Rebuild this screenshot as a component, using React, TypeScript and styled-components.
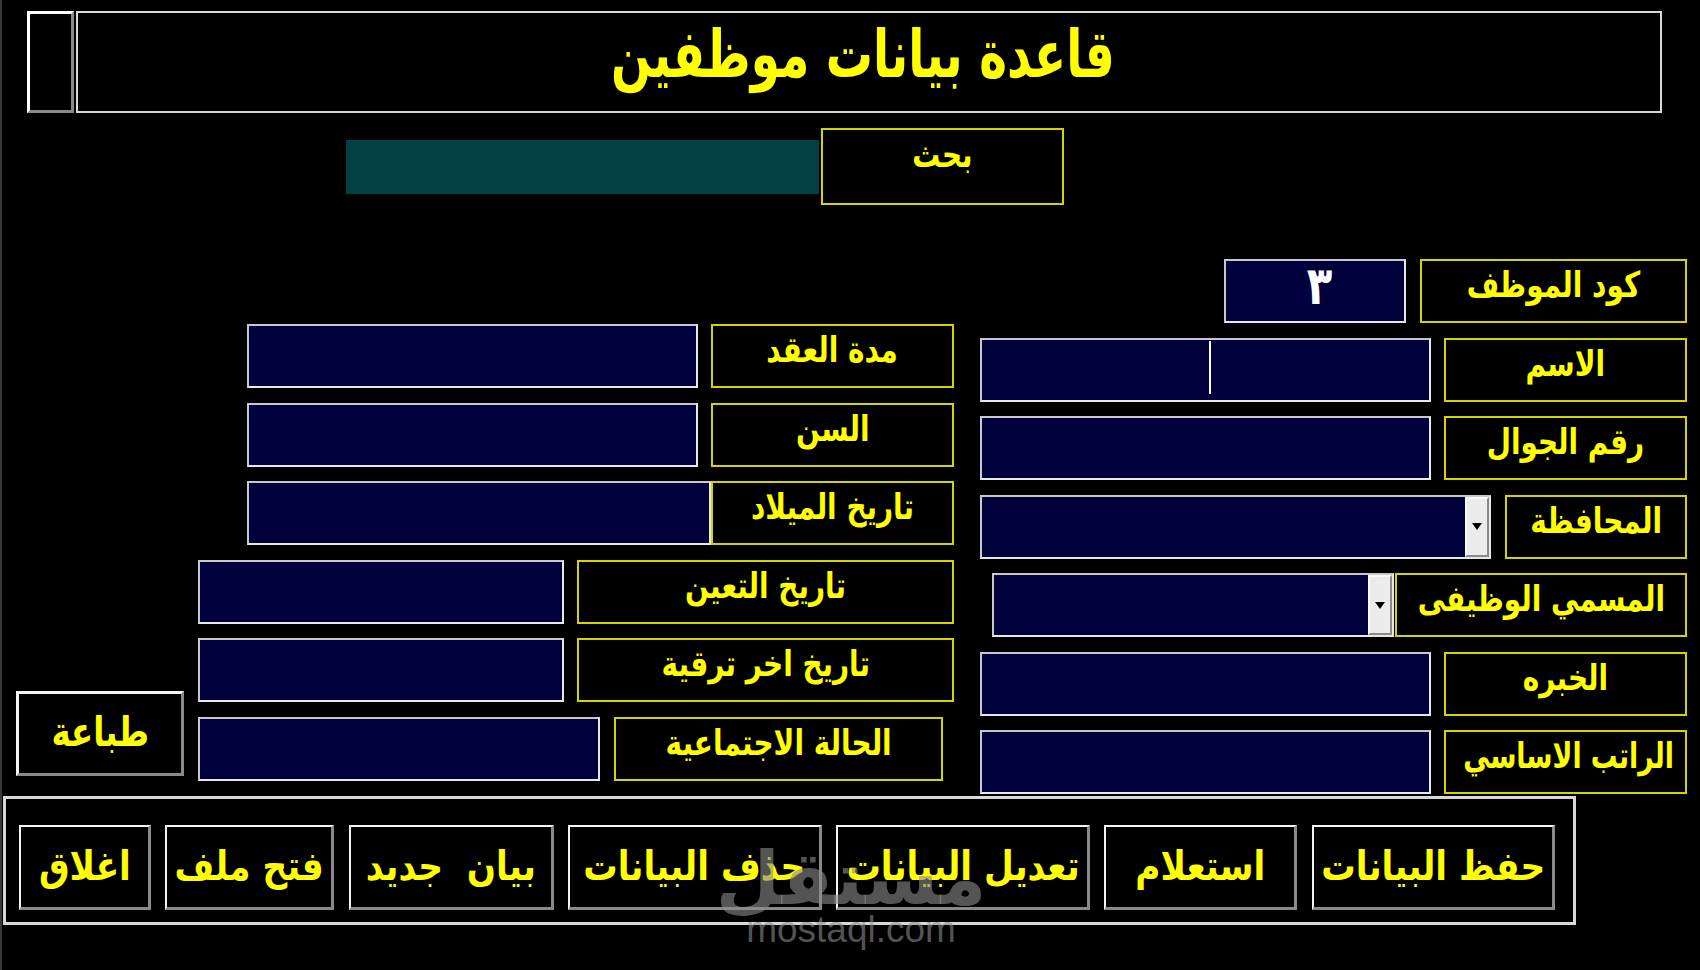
import React from "react";
import styled, { createGlobalStyle } from "styled-components";

const GlobalStyle = createGlobalStyle`
  html, body {
    margin: 0;
    padding: 0;
    background: #000;
  }
  body {
    font-family: "DejaVu Sans", "Liberation Sans", sans-serif;
  }
`;

const YELLOW = "#ffff00";
const LABEL_BORDER = "#d4d400";
const FIELD_BG = "#00003c";

const Screen = styled.div`
  position: relative;
  width: 1700px;
  height: 970px;
  background: #000;
  box-shadow: inset 2px 0 0 #3a3a3a;
  overflow: hidden;
  font-family: "DejaVu Sans", "Liberation Sans", sans-serif;
`;

// the Arabic face here runs wide and short, so squeeze it a little
const Squeezed = styled.span<{ $sx?: number; $sy?: number }>`
  display: inline-block;
  transform: scale(${(p) => p.$sx ?? 0.9}, ${(p) => p.$sy ?? 1.15});
  white-space: pre;
`;

/* ---------- header ---------- */

const HeaderRow = styled.div`
  display: flex;
  height: 102px;
  margin: 11px 0 0 27px;
`;

const SideBox = styled.div`
  box-sizing: border-box;
  width: 47px;
  height: 100%;
  border-style: solid;
  border-width: 3px;
  border-color: #fff #8a8a8a #8a8a8a #fff;
`;

const TitleFrame = styled.div`
  box-sizing: border-box;
  width: 1586px;
  margin-left: 2px;
  height: 100%;
  border: 2px solid #d8d8d8;
  display: flex;
  justify-content: center;
  align-items: center;
  padding: 0 12px 14px 0;
`;

const Title = styled.h1`
  margin: 0;
  color: ${YELLOW};
  font-size: 56px;
  font-weight: 700;
  line-height: 1.2;
`;

/* ---------- search ---------- */

const SearchRow = styled.div`
  display: flex;
  align-items: center;
  margin: 15px 0 0 346px;
`;

const SearchField = styled.div`
  width: 473px;
  height: 54px;
  background: #024043;
`;

const SearchButton = styled.div`
  box-sizing: border-box;
  width: 243px;
  height: 77px;
  margin-left: 2px;
  border: 2px solid ${LABEL_BORDER};
  color: ${YELLOW};
  font-size: 31px;
  font-weight: 700;
  text-align: center;
  padding-top: 6px;
`;

/* ---------- form fields ---------- */

const FormArea = styled.div`
  display: grid;
  grid-template-columns: 938px 707px;
  column-gap: 26px;
  align-items: start;
  margin: 54px 0 0 16px;
`;

const LeftColumn = styled.div`
  display: grid;
  grid-template-columns: 168px 770px;
  grid-auto-rows: 64px;
  row-gap: 14.5px;
  margin-top: 65px;
`;

const RightColumn = styled.div`
  display: flex;
  flex-direction: column;
  gap: 14.5px;
`;

const FieldRow = styled.div<{ $gap: number; $end?: number }>`
  grid-column: 2;
  display: flex;
  justify-content: flex-end;
  height: 64px;
  gap: ${(p) => p.$gap}px;
  padding-right: ${(p) => p.$end ?? 0}px;
`;

const FieldLabel = styled.div<{ $width: number }>`
  box-sizing: border-box;
  width: ${(p) => p.$width}px;
  height: 100%;
  border: 2px solid ${LABEL_BORDER};
  color: ${YELLOW};
  font-size: 31px;
  font-weight: 700;
  text-align: center;
  line-height: 1.2;
  padding-top: 5px;
  white-space: nowrap;
`;

const FieldInput = styled.div<{ $width: number }>`
  box-sizing: border-box;
  width: ${(p) => p.$width}px;
  height: 100%;
  background: ${FIELD_BG};
  border: 2px solid #c8c8c8;
  border-right-color: #e8e8e8;
  border-bottom-color: #e8e8e8;
  display: flex;
`;

const CodeValue = styled.div`
  flex: 1;
  color: #fff;
  font-size: 44px;
  font-weight: 700;
  text-align: center;
  line-height: 1.1;
  padding: 1px 0 0 8px;
`;

const Caret = styled.span`
  display: block;
  width: 2px;
  height: 53px;
  margin: 1px 0 0 227px;
  background: #fff;
`;

const Combo = styled(FieldInput)`
  justify-content: flex-end;
`;

const DropButton = styled.div`
  box-sizing: border-box;
  width: 24px;
  height: 100%;
  background: #ececec;
  border-style: solid;
  border-width: 2px;
  border-color: #fafafa #8a8a8a #8a8a8a #fafafa;
  display: flex;
  align-items: center;
  justify-content: center;

  &::after {
    content: "";
    border-left: 5px solid transparent;
    border-right: 5px solid transparent;
    border-top: 7px solid #000;
  }
`;

const PrintButton = styled.div`
  grid-column: 1;
  grid-row: 5 / span 2;
  align-self: end;
  box-sizing: border-box;
  width: 168px;
  height: 85px;
  margin-bottom: 5px;
  border-style: solid;
  border-width: 3px;
  border-color: #f4f4f4 #8a8a8a #8a8a8a #f4f4f4;
  color: ${YELLOW};
  font-size: 36px;
  font-weight: 700;
  display: flex;
  align-items: center;
  justify-content: center;
  padding-bottom: 4px;
`;

/* ---------- command bar ---------- */

const CommandFrame = styled.div`
  box-sizing: border-box;
  width: 1573px;
  height: 129px;
  margin: 2px 0 0 3px;
  border: 3px solid #d8d8d8;
  display: flex;
  gap: 14.3px;
  padding: 26px 0 0 13px;
`;

const CommandButton = styled.div<{ $width: number }>`
  box-sizing: border-box;
  width: ${(p) => p.$width}px;
  height: 85px;
  border-style: solid;
  border-width: 2px 3px 3px 2px;
  border-color: #f4f4f4 #8a8a8a #8a8a8a #f4f4f4;
  color: ${YELLOW};
  font-size: 35px;
  font-weight: 700;
  display: flex;
  align-items: center;
  justify-content: center;
  white-space: pre;
  padding-bottom: 2px;
`;

/* ---------- site stamp ---------- */

const Stamp = styled.div`
  position: absolute;
  left: 744px;
  top: 838px;
  width: 214px;
  display: flex;
  flex-direction: column;
  align-items: center;
  color: rgba(140, 140, 140, 0.6);
  pointer-events: none;
`;

const StampMark = styled.div`
  font-size: 74px;
  font-weight: 700;
  line-height: 80px;
`;

const StampSite = styled.div`
  font-family: "Liberation Sans", Arial, sans-serif;
  font-size: 37px;
  line-height: 36px;
  margin-top: -6px;
`;

const commands = [
  { text: "اغلاق", width: 132 },
  { text: "فتح ملف", width: 169 },
  { text: "بيان  جديد", width: 205 },
  { text: "حذف البيانات", width: 254 },
  { text: "تعديل البيانات", width: 254 },
  { text: "استعلام", width: 193 },
  { text: "حفظ البيانات", width: 243 },
];

const App = () => {
  return (
    <Screen>
      <GlobalStyle />
      <HeaderRow>
        <SideBox />
        <TitleFrame>
          <Title>
            <Squeezed $sx={0.84} $sy={1.18}>
              قاعدة بيانات موظفين
            </Squeezed>
          </Title>
        </TitleFrame>
      </HeaderRow>

      <SearchRow>
        <SearchField />
        <SearchButton>
          <Squeezed>بحث</Squeezed>
        </SearchButton>
      </SearchRow>

      <FormArea>
        <LeftColumn>
          <FieldRow $gap={13}>
            <FieldInput $width={451} />
            <FieldLabel $width={243}>
              <Squeezed>مدة العقد</Squeezed>
            </FieldLabel>
          </FieldRow>
          <FieldRow $gap={13}>
            <FieldInput $width={451} />
            <FieldLabel $width={243}>
              <Squeezed>السن</Squeezed>
            </FieldLabel>
          </FieldRow>
          <FieldRow $gap={0}>
            <FieldInput $width={464} />
            <FieldLabel $width={243}>
              <Squeezed>تاريخ الميلاد</Squeezed>
            </FieldLabel>
          </FieldRow>
          <FieldRow $gap={13}>
            <FieldInput $width={366} />
            <FieldLabel $width={377}>
              <Squeezed>تاريخ التعين</Squeezed>
            </FieldLabel>
          </FieldRow>
          <FieldRow $gap={13}>
            <FieldInput $width={366} />
            <FieldLabel $width={377}>
              <Squeezed>تاريخ اخر ترقية</Squeezed>
            </FieldLabel>
          </FieldRow>
          <FieldRow $gap={14} $end={11}>
            <FieldInput $width={402} />
            <FieldLabel $width={329}>
              <Squeezed>الحالة الاجتماعية</Squeezed>
            </FieldLabel>
          </FieldRow>
          <PrintButton>
            <Squeezed>طباعة</Squeezed>
          </PrintButton>
        </LeftColumn>

        <RightColumn>
          <FieldRow $gap={14}>
            <FieldInput $width={182}>
              <CodeValue>
                <Squeezed $sx={0.95} $sy={1.2}>
                  ٣
                </Squeezed>
              </CodeValue>
            </FieldInput>
            <FieldLabel $width={267}>
              <Squeezed>كود الموظف</Squeezed>
            </FieldLabel>
          </FieldRow>
          <FieldRow $gap={13}>
            <FieldInput $width={451}>
              <Caret />
            </FieldInput>
            <FieldLabel $width={243}>
              <Squeezed>الاسم</Squeezed>
            </FieldLabel>
          </FieldRow>
          <FieldRow $gap={13}>
            <FieldInput $width={451} />
            <FieldLabel $width={243}>
              <Squeezed>رقم الجوال</Squeezed>
            </FieldLabel>
          </FieldRow>
          <FieldRow $gap={14}>
            <Combo $width={511}>
              <DropButton />
            </Combo>
            <FieldLabel $width={182}>
              <Squeezed>المحافظة</Squeezed>
            </FieldLabel>
          </FieldRow>
          <FieldRow $gap={1}>
            <Combo $width={402}>
              <DropButton />
            </Combo>
            <FieldLabel $width={292}>
              <Squeezed>المسمي الوظيفى</Squeezed>
            </FieldLabel>
          </FieldRow>
          <FieldRow $gap={13}>
            <FieldInput $width={451} />
            <FieldLabel $width={243}>
              <Squeezed>الخبره</Squeezed>
            </FieldLabel>
          </FieldRow>
          <FieldRow $gap={13}>
            <FieldInput $width={451} />
            <FieldLabel $width={243}>
              <Squeezed $sx={0.86}>الراتب الاساسي</Squeezed>
            </FieldLabel>
          </FieldRow>
        </RightColumn>
      </FormArea>

      <CommandFrame>
        {commands.map((cmd) => (
          <CommandButton key={cmd.text} $width={cmd.width}>
            <Squeezed $sx={0.98} $sy={1.15}>
              {cmd.text}
            </Squeezed>
          </CommandButton>
        ))}
      </CommandFrame>

      <Stamp>
        <StampMark>مستقل</StampMark>
        <StampSite>mostaql.com</StampSite>
      </Stamp>
    </Screen>
  );
};

export default App;
